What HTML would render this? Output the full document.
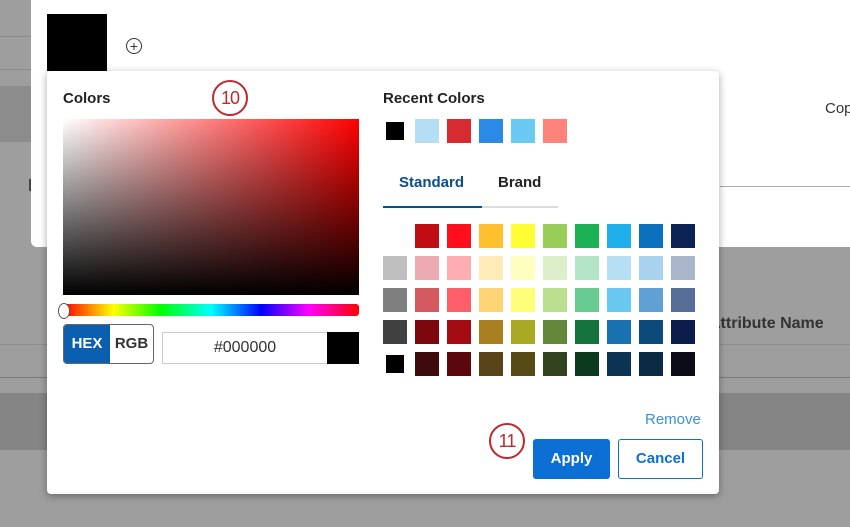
<!DOCTYPE html>
<html><head><style>
body{margin:0;width:850px;height:527px;background:#9e9e9e;position:relative;overflow:hidden;font-family:"Liberation Sans",sans-serif}
.a{position:absolute}
.sw{position:absolute;width:24px;height:24px}
.badge{position:absolute;width:32px;height:32px;border:2px solid #c0282d;border-radius:50%;color:#c0282d;font-size:18px;line-height:32px;text-align:center;letter-spacing:-1px}
</style></head><body>
<div class="a" style="left:0;top:36px;width:31px;height:1px;background:#8a8a8a"></div>
<div class="a" style="left:0;top:69px;width:31px;height:1px;background:#8a8a8a"></div>
<div class="a" style="left:0;top:86px;width:47px;height:56px;background:#8c8c8c"></div>
<div class="a" style="left:0;top:344px;width:850px;height:1px;background:#8e8e8e"></div>
<div class="a" style="left:0;top:377px;width:850px;height:1px;background:#7a7a7a"></div>
<div class="a" style="left:0;top:393px;width:850px;height:57px;background:#858585"></div>
<div class="a" style="left:31px;top:0;width:819px;height:247px;background:#fff;border-radius:0 0 0 6px"></div>
<div class="a" style="left:720px;top:186px;width:130px;height:1px;background:#aaa"></div>
<div class="a" style="left:29px;top:179px;width:2px;height:12px;background:#444"></div>
<div class="a" style="left:825px;top:100px;font-size:15px;color:#333">Cop</div>
<div class="a" style="left:709px;top:315px;font-size:16px;font-weight:bold;color:#333">Attribute Name</div>
<div class="a" style="left:47px;top:14px;width:60px;height:57px;background:#000"></div>
<div class="a" style="left:126px;top:38px;width:14px;height:14px;border:1px solid #333;border-radius:50%;font-size:14px;line-height:14px;text-align:center;color:#333">+</div>
<div class="a" style="left:47px;top:71px;width:672px;height:423px;background:#fff;border-radius:4px;box-shadow:0 2px 8px rgba(0,0,0,.35)"></div>
<div class="a" style="left:63px;top:90px;font-size:15px;font-weight:bold;color:#222">Colors</div>
<div class="badge" style="left:212px;top:80px">10</div>
<div class="a" style="left:63px;top:119px;width:296px;height:176px;background:linear-gradient(to top,#000,rgba(0,0,0,0)),linear-gradient(to right,#fff,#f00)"></div>
<div class="a" style="left:63px;top:304px;width:296px;height:12px;border-radius:3px;background:linear-gradient(to right,#f00,#ff0 17%,#0f0 33%,#0ff 50%,#00f 67%,#f0f 83%,#f00)"></div>
<div class="a" style="left:58px;top:303px;width:10px;height:14px;border-radius:50%;background:#fff;border:1px solid #555"></div>
<div class="a" style="left:63px;top:324px;width:89px;height:38px;border:1px solid #666;border-radius:4px;overflow:hidden;background:#fff">
<div class="a" style="left:0;top:0;width:46px;height:38px;background:#0a5fb0;color:#fff;font-weight:bold;font-size:15px;line-height:38px;text-align:center">HEX</div>
<div class="a" style="left:46px;top:0;width:43px;height:38px;color:#333;font-weight:bold;font-size:15px;line-height:38px;text-align:center">RGB</div></div>
<div class="a" style="left:162px;top:332px;width:164px;height:30px;border:1px solid #ccc;font-size:16px;line-height:30px;text-align:center;color:#333">#000000</div>
<div class="a" style="left:327px;top:332px;width:32px;height:32px;background:#000"></div>
<div class="a" style="left:383px;top:90px;font-size:15px;font-weight:bold;color:#222">Recent Colors</div>
<div class="a" style="left:386px;top:122px;width:18px;height:18px;background:#000"></div>
<div class="sw" style="left:415px;top:119px;background:#b3def3"></div>
<div class="sw" style="left:447px;top:119px;background:#d62b30"></div>
<div class="sw" style="left:479px;top:119px;background:#2a8ae6"></div>
<div class="sw" style="left:511px;top:119px;background:#69c9f3"></div>
<div class="sw" style="left:543px;top:119px;background:#fe837a"></div>
<div class="a" style="left:399px;top:174px;font-size:15px;font-weight:bold;color:#0a4d8c">Standard</div>
<div class="a" style="left:498px;top:174px;font-size:15px;font-weight:bold;color:#222">Brand</div>
<div class="a" style="left:383px;top:206px;width:175px;height:2px;background:#ddd"></div>
<div class="a" style="left:383px;top:206px;width:99px;height:2px;background:#0a4d8c"></div>
<div class="a" style="left:645px;top:411px;font-size:15px;color:#3d8ed6">Remove</div>
<div class="badge" style="left:489px;top:423px">11</div>
<div class="a" style="left:533px;top:439px;width:77px;height:40px;background:#0b6fd3;border-radius:3px;color:#fff;font-weight:bold;font-size:15px;line-height:40px;text-align:center">Apply</div>
<div class="a" style="left:618px;top:439px;width:83px;height:38px;border:1px solid #0b6fd3;border-radius:3px;color:#0b6fd3;font-weight:bold;font-size:15px;line-height:38px;text-align:center">Cancel</div>
<div class="sw" style="left:415px;top:224px;background:#c00d13"></div><div class="sw" style="left:447px;top:224px;background:#fe0f1b"></div><div class="sw" style="left:479px;top:224px;background:#fec02f"></div><div class="sw" style="left:511px;top:224px;background:#fefe33"></div><div class="sw" style="left:543px;top:224px;background:#98cd58"></div><div class="sw" style="left:575px;top:224px;background:#1bb154"></div><div class="sw" style="left:607px;top:224px;background:#1fb0ec"></div><div class="sw" style="left:639px;top:224px;background:#0b70be"></div><div class="sw" style="left:671px;top:224px;background:#0c2454"></div>
<div class="sw" style="left:383px;top:256px;background:#bfbfbf"></div><div class="sw" style="left:415px;top:256px;background:#ebabb0"></div><div class="sw" style="left:447px;top:256px;background:#feaeb3"></div><div class="sw" style="left:479px;top:256px;background:#feebb8"></div><div class="sw" style="left:511px;top:256px;background:#fefec0"></div><div class="sw" style="left:543px;top:256px;background:#ddeeca"></div><div class="sw" style="left:575px;top:256px;background:#b4e5c7"></div><div class="sw" style="left:607px;top:256px;background:#b7dff3"></div><div class="sw" style="left:639px;top:256px;background:#a9d2ef"></div><div class="sw" style="left:671px;top:256px;background:#a9b6ca"></div>
<div class="sw" style="left:383px;top:288px;background:#7f7f7f"></div><div class="sw" style="left:415px;top:288px;background:#d55a60"></div><div class="sw" style="left:447px;top:288px;background:#fe5f69"></div><div class="sw" style="left:479px;top:288px;background:#fdd576"></div><div class="sw" style="left:511px;top:288px;background:#fefe79"></div><div class="sw" style="left:543px;top:288px;background:#bae08f"></div><div class="sw" style="left:575px;top:288px;background:#68cb8f"></div><div class="sw" style="left:607px;top:288px;background:#68c8f2"></div><div class="sw" style="left:639px;top:288px;background:#61a0d4"></div><div class="sw" style="left:671px;top:288px;background:#566e98"></div>
<div class="sw" style="left:383px;top:320px;background:#404040"></div><div class="sw" style="left:415px;top:320px;background:#7c080d"></div><div class="sw" style="left:447px;top:320px;background:#a50b12"></div><div class="sw" style="left:479px;top:320px;background:#a87f21"></div><div class="sw" style="left:511px;top:320px;background:#aaa925"></div><div class="sw" style="left:543px;top:320px;background:#64883a"></div><div class="sw" style="left:575px;top:320px;background:#13733a"></div><div class="sw" style="left:607px;top:320px;background:#1872b0"></div><div class="sw" style="left:639px;top:320px;background:#0c4a7c"></div><div class="sw" style="left:671px;top:320px;background:#0b1e4b"></div>
<div class="a" style="left:386px;top:355px;width:18px;height:18px;background:#000"></div><div class="sw" style="left:415px;top:352px;background:#3f0a0b"></div><div class="sw" style="left:447px;top:352px;background:#5a080d"></div><div class="sw" style="left:479px;top:352px;background:#584418"></div><div class="sw" style="left:511px;top:352px;background:#564b14"></div><div class="sw" style="left:543px;top:352px;background:#33431e"></div><div class="sw" style="left:575px;top:352px;background:#0b391e"></div><div class="sw" style="left:607px;top:352px;background:#0d3352"></div><div class="sw" style="left:639px;top:352px;background:#0b2a44"></div><div class="sw" style="left:671px;top:352px;background:#0b0c17"></div>
</body></html>
